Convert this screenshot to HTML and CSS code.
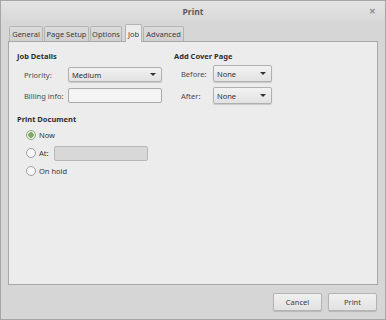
FILE: index.html
```html
<!DOCTYPE html>
<html>
<head>
<meta charset="utf-8">
<link rel="stylesheet" href="styles.css">
</head>
<body>
<div class="window">
  <div class="titlebar">
    <span class="title">Print</span>
    <span class="close">&#x2715;</span>
  </div>
  <div class="tabs">
    <div class="tab t-general">General</div>
    <div class="tab t-page">Page Setup</div>
    <div class="tab t-options">Options</div>
    <div class="tab t-job active">Job</div>
    <div class="tab t-adv">Advanced</div>
  </div>
  <div class="panel">
    <div class="columns">
      <div class="col left">
        <div class="heading">Job Details</div>
        <div class="formgrid">
          <span class="label">Priority:</span>
          <div class="combo wide">Medium<span class="arrow"></span></div>
          <span class="label">Billing info:</span>
          <div class="entry wide"></div>
        </div>
      </div>
      <div class="col right">
        <div class="heading">Add Cover Page</div>
        <div class="formgrid cover">
          <span class="label">Before:</span>
          <div class="combo narrow">None<span class="arrow"></span></div>
          <span class="label">After:</span>
          <div class="combo narrow">None<span class="arrow"></span></div>
        </div>
      </div>
    </div>
    <div class="heading doc">Print Document</div>
    <div class="radios">
      <div class="radio-row"><span class="radio checked"></span><span>Now</span></div>
      <div class="radio-row"><span class="radio"></span><span>At:</span><div class="entry disabled"></div></div>
      <div class="radio-row"><span class="radio"></span><span>On hold</span></div>
    </div>
  </div>
  <div class="footer">
    <button class="btn">Cancel</button>
    <button class="btn">Print</button>
  </div>
</div>
</body>
</html>
```

FILE: styles.css
```css
html, body {
  margin: 0;
  padding: 0;
  background: #d6d6d6;
}
body {
  font-family: "Noto Sans", "Open Sans", sans-serif;
  font-size: 7.5px;
  color: #3c3c3c;
}
.window {
  width: 386px;
  height: 320px;
  box-sizing: border-box;
  border: 1px solid #a6a6a6;
  background: #d6d6d6;
  display: flex;
  flex-direction: column;
}
.titlebar {
  height: 20px;
  position: relative;
  display: flex;
  align-items: center;
  justify-content: center;
  background: linear-gradient(#e4e4e4, #d8d8d8);
}
.title {
  font-size: 8.5px;
  font-weight: bold;
  color: #5a5a5a;
}
.close {
  position: absolute;
  right: 9px;
  top: 4px;
  font-size: 8px;
  color: #8a8a8a;
  font-weight: bold;
}
.tabs {
  display: flex;
  align-items: flex-end;
  gap: 1px;
  padding-left: 8px;
  height: 20px;
}
.tab {
  height: 15px;
  box-sizing: border-box;
  border: 1px solid #b4b4b4;
  border-bottom: none;
  border-radius: 2px 2px 0 0;
  background: linear-gradient(#dcdcdc, #d0d0d0);
  display: flex;
  align-items: center;
  justify-content: center;
  color: #3c3c3c;
  white-space: nowrap;
}
.t-general { width: 34px; }
.t-page { width: 45px; }
.t-options { width: 32px; }
.t-job { width: 17px; margin-left: 2px; }
.t-adv { width: 41px; }
.tab.active {
  height: 18px;
  background: #ececec;
  margin-bottom: -1px;
  position: relative;
  z-index: 1;
}
.panel {
  margin: 0 7px 0 7px;
  height: 244px;
  box-sizing: border-box;
  border: 1px solid #a8a8a8;
  background: #ececec;
  padding: 8px 8px;
}
.columns {
  display: flex;
}
.col.left {
  width: 157px;
}
.heading {
  font-weight: bold;
  color: #2e2e2e;
  height: 12px;
  line-height: 12px;
}
.formgrid {
  display: grid;
  grid-template-columns: 44px 94px;
  row-gap: 6px;
  align-items: center;
  padding-left: 7px;
  margin-top: 5px;
}
.formgrid.cover {
  grid-template-columns: 32px 59px;
  row-gap: 5px;
  margin-top: 3px;
}
.label {
  color: #4a4a4a;
}
.combo {
  height: 15px;
  box-sizing: border-box;
  border: 1px solid #b0b0b0;
  border-radius: 2px;
  background: linear-gradient(#f2f2f2, #e2e2e2);
  box-shadow: 0 1px 1px rgba(0,0,0,0.15);
  display: flex;
  align-items: center;
  padding-left: 3px;
  position: relative;
  color: #333;
}
.combo.narrow { height: 17px; }
.arrow {
  position: absolute;
  right: 5px;
  top: 50%;
  margin-top: -2px;
  width: 0;
  height: 0;
  border-left: 3px solid transparent;
  border-right: 3px solid transparent;
  border-top: 3px solid #333;
}
.entry {
  height: 15px;
  box-sizing: border-box;
  border: 1px solid #aaaaaa;
  border-radius: 2px;
  background: #f4f4f4;
}
.entry.disabled {
  width: 94px;
  background: #d8d8d8;
  border-color: #b8b8b8;
  margin-left: 2px;
}
.heading.doc {
  margin-top: 9px;
}
.radios {
  padding-left: 9px;
  margin-top: 2px;
  display: flex;
  flex-direction: column;
  gap: 2px;
}
.radio-row {
  display: flex;
  align-items: center;
  gap: 3px;
  height: 16px;
  color: #333;
}
.radio {
  width: 8px;
  height: 8px;
  border: 1px solid #a0a0a0;
  border-radius: 50%;
  background: #f6f6f6;
  box-sizing: content-box;
}
.radio.checked {
  background: radial-gradient(circle, #7fa86a 0 2.5px, #e4eedd 3px);
  border-color: #8ab07a;
}
.footer {
  flex: 1;
  display: flex;
  justify-content: flex-end;
  align-items: flex-start;
  padding: 8px 8px 0 0;
  gap: 6px;
}
.btn {
  width: 49px;
  height: 18px;
  font-family: inherit;
  font-size: 7.5px;
  color: #3a3a3a;
  border: 1px solid #b4b4b4;
  border-radius: 2px;
  background: linear-gradient(#f0f0f0, #e2e2e2);
  box-shadow: 0 1px 1px rgba(0,0,0,0.15);
  padding: 0;
}
```
